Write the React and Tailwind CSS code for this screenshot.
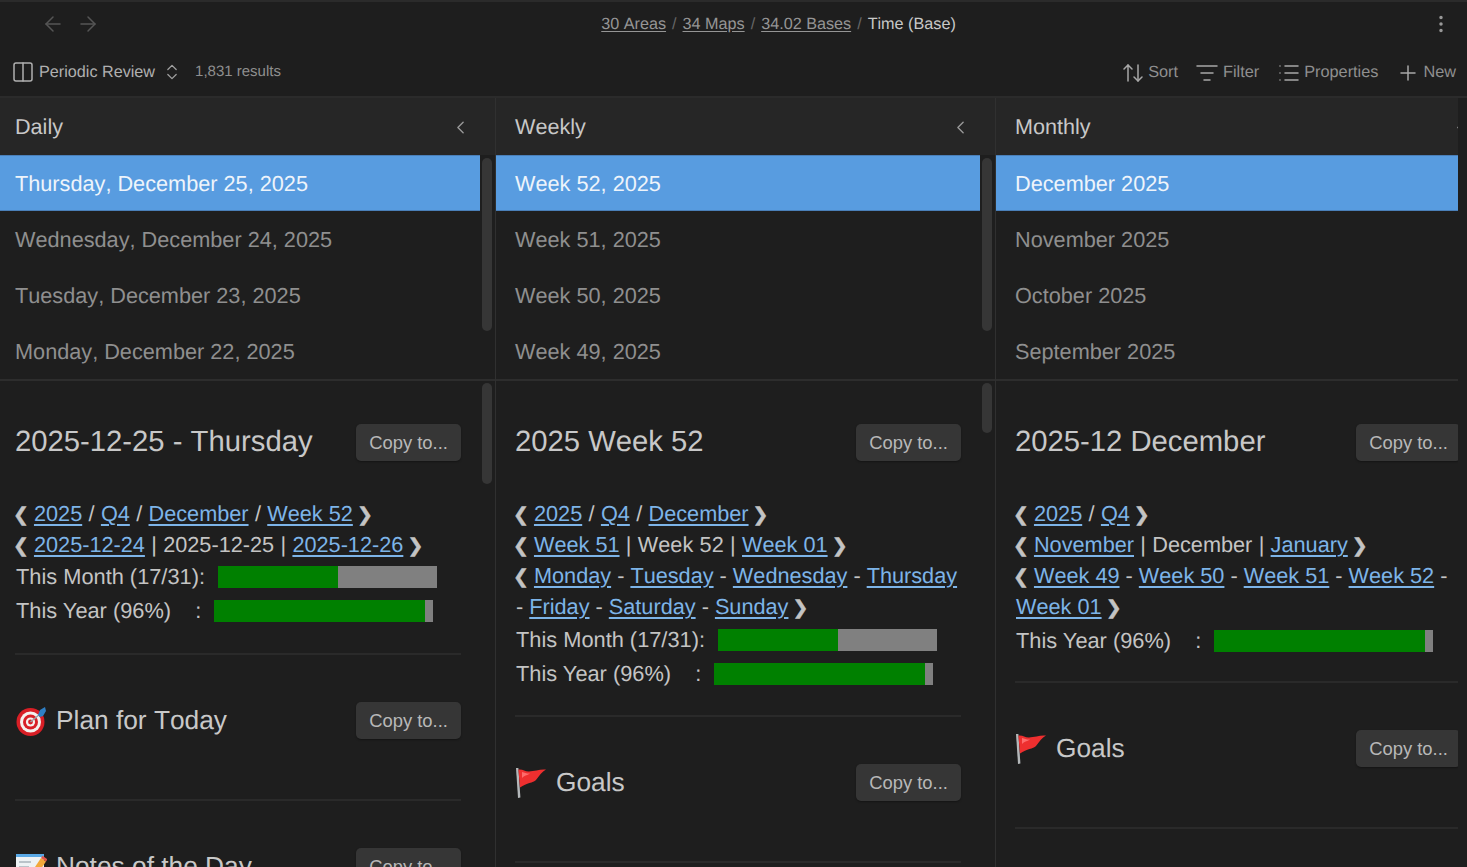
import {
  ArrowLeft,
  ArrowRight,
  ArrowUpDown,
  ChevronLeft,
  ChevronsUpDown,
  Columns2,
  EllipsisVertical,
  List,
  ListFilter,
  Plus,
} from 'lucide-react';

const columns = [
  {
    name: 'Daily',
    width: 'w-[496px]',
    listWidth: 'w-[480px]',
    inset: 'pl-[15px]',
    noteThumb: 'h-[101px]',
    barsTop: 'mt-0',
    barsBottom: 'h-[25px]',
    items: ['Thursday, December 25, 2025', 'Wednesday, December 24, 2025', 'Tuesday, December 23, 2025', 'Monday, December 22, 2025'],
    title: '2025-12-25 - Thursday',
    nav: [
      [['2025'], ' / ', ['Q4'], ' / ', ['December'], ' / ', ['Week 52']],
      [['2025-12-24'], ' | 2025-12-25 | ', ['2025-12-26']],
    ],
    month: true,
    sections: [
      { emoji: 'target', title: 'Plan for Today' },
      { emoji: 'memo', title: 'Notes of the Day' },
    ],
  },
  {
    name: 'Weekly',
    width: 'w-[500px]',
    listWidth: 'w-[484px]',
    inset: 'pl-[19px]',
    noteThumb: 'h-[50px]',
    barsTop: 'mt-px',
    barsBottom: 'h-[24px]',
    items: ['Week 52, 2025', 'Week 51, 2025', 'Week 50, 2025', 'Week 49, 2025'],
    title: '2025 Week 52',
    nav: [
      [['2025'], ' / ', ['Q4'], ' / ', ['December']],
      [['Week 51'], ' | Week 52 | ', ['Week 01']],
      [['Monday'], ' - ', ['Tuesday'], ' - ', ['Wednesday'], ' - ', ['Thursday'], ' - ', ['Friday'], ' - ', ['Saturday'], ' - ', ['Sunday']],
    ],
    month: true,
    sections: [{ emoji: 'flag', title: 'Goals' }],
  },
  {
    name: 'Monthly',
    width: 'w-[500px]',
    listWidth: 'w-[484px]',
    inset: 'pl-[19px]',
    barsTop: 'mt-[2px]',
    barsBottom: 'h-[23px]',
    items: ['December 2025', 'November 2025', 'October 2025', 'September 2025'],
    title: '2025-12 December',
    nav: [
      [['2025'], ' / ', ['Q4']],
      [['November'], ' | December | ', ['January']],
      [['Week 49'], ' - ', ['Week 50'], ' - ', ['Week 51'], ' - ', ['Week 52'], ' - ', ['Week 01']],
    ],
    month: false,
    sections: [{ emoji: 'flag', title: 'Goals' }],
  },
];

function TargetEmoji() {
  return (
    <svg viewBox="0 0 32 32" className="w-[32px] h-[32px] shrink-0">
      <circle cx="15.5" cy="17" r="14" fill="#d81f26" />
      <circle cx="15.5" cy="17" r="10.5" fill="#f4f1ee" />
      <circle cx="15.5" cy="17" r="7.5" fill="#d81f26" />
      <circle cx="15.5" cy="17" r="4.6" fill="#f4f1ee" />
      <circle cx="15.5" cy="17" r="2.4" fill="#d81f26" />
      <path d="M15.5 17 25 9" stroke="#9aa3a8" strokeWidth="1.4" />
      <path d="M23 10 25 5 30 2 31 6 28 11 25 12Z" fill="#2f7fc4" />
    </svg>
  );
}

function MemoEmoji() {
  return (
    <svg viewBox="0 0 32 32" className="w-[32px] h-[32px] shrink-0">
      <rect x="1" y="3" width="28" height="26" fill="#eef2f4" />
      <rect x="1" y="3" width="28" height="3" fill="#5aa9e6" />
      <path d="M4 11h12M4 16h10M4 21h8" stroke="#a9b4ba" strokeWidth="1.5" />
      <path d="M14 25 26 7l5 3.5L19 28l-6 2Z" fill="#f2a93b" />
      <path d="M26 7l1.5-2.2 5 3.5-1.5 2.2Z" fill="#e2574c" />
    </svg>
  );
}

function FlagEmoji() {
  return (
    <svg viewBox="0 0 32 32" className="w-[32px] h-[32px] shrink-0">
      <path d="M1 1 3 31 5.4 30.6 3.4 1Z" fill="#b4b8ba" />
      <path d="M3.4 2.5C8 2 10 4.6 14 4.4 20 4.2 25 2 31 2.6 27 5 24 9 21 13 18 16 12 15.6 5 20.6Z" fill="#ee2f2f" />
      <path d="M7 5C10 5.5 12 7 15 6.5 12 8.5 9 8.5 7 11Z" fill="#ff6b6b" />
    </svg>
  );
}

const emojis = { target: TargetEmoji, memo: MemoEmoji, flag: FlagEmoji };

function CopyButton() {
  return (
    <button className="shrink-0 w-[105px] h-[37px] rounded-[5px] bg-[#363636] text-[#b8b8b8] text-[18.4px] leading-[38px] text-center shadow-[0_1px_2px_rgba(0,0,0,0.35)]">
      Copy to...
    </button>
  );
}

function NavLine({ parts }) {
  return (
    <p className="text-[21.7px] leading-[31px] text-[#c4c4c4] ml-px">
      <span className="font-['DejaVu_Sans'] text-[19px] leading-[0] font-bold [-webkit-text-stroke:0.6px] -ml-[3px] -mr-[1px]">❮</span>{' '}
      {parts.map((part, i) =>
        Array.isArray(part) ? (
          <a key={i} className="text-[#7db4e8] underline underline-offset-[3px] decoration-[1.5px] whitespace-nowrap">
            {part[0]}
          </a>
        ) : (
          <span key={i} className={part === ' - ' ? '' : '[word-spacing:0.3px]'}>
            {part}
          </span>
        ),
      )}{' '}
      <span className="font-['DejaVu_Sans'] text-[19px] leading-[0] font-bold [-webkit-text-stroke:0.6px] -ml-[2px]">❯</span>
    </p>
  );
}

function Progress({ label, value }) {
  return (
    <div className="flex items-center h-[34px] text-[21.8px] [font-kerning:normal] text-[#c4c4c4] ml-px">
      <span className="whitespace-pre">{label}</span>
      <div className="ml-[7px] w-[219px] h-[22px] bg-[#808080]">
        <div className="h-full bg-[#008000]" style={{ width: `${value}%` }} />
      </div>
    </div>
  );
}

function Section({ emoji, title }) {
  const Emoji = emojis[emoji];
  return (
    <section className="border-t-2 border-[#2a2a2a] pt-[47px] pb-[60px] flex items-center justify-between">
      <h2 className="flex items-center gap-[9px] text-[26.3px] leading-[37px] text-[#c8c8c8] whitespace-nowrap">
        <Emoji />
        {title}
      </h2>
      <CopyButton />
    </section>
  );
}

function Column({ column, scroll }) {
  return (
    <div className={`${column.width} shrink-0 h-full flex flex-col border-r border-[#303030]`}>
      <div className={`h-[57px] shrink-0 bg-[#262626] flex items-center justify-between ${column.inset} pt-px pr-[24px] text-[21.6px] text-[#c8c8c8]`}>
        {column.name}
        <ChevronLeft size={21} strokeWidth={1.6} className="text-[#999]" />
      </div>
      <div className="h-[226px] shrink-0 flex border-b-2 border-[#2d2d2d] overflow-hidden">
        <ul className={`${column.listWidth} shrink-0`}>
          {column.items.map((item, i) => (
            <li
              key={item}
              className={
                i === 0
                  ? `h-[56px] flex items-center ${column.inset} pt-[2px] text-[21.7px] bg-[#589ce0] text-[#eef4fb] border-y border-[#4a7fb8]`
                  : `h-[56px] flex items-center ${column.inset} pt-[2px] text-[21.7px] text-[#8f8f8f]`
              }
            >
              {item}
            </li>
          ))}
        </ul>
        {scroll && (
          <div className="pt-[3px] pl-[2px]">
            <div className="w-[10px] rounded-[5px] bg-[#363636] h-[173px]" />
          </div>
        )}
      </div>
      <div className={`relative flex-1 min-h-0 overflow-hidden ${column.inset} pr-[34px]`}>
        {scroll && <div className={`absolute right-[3px] top-[2px] w-[10px] rounded-[5px] bg-[#363636] ${column.noteThumb}`} />}
        <div className="pt-[43px] pb-[37px] flex items-center justify-between">
          <h1 className="text-[29.25px] leading-[35px] pb-px text-[#c8c8c8] whitespace-nowrap">{column.title}</h1>
          <CopyButton />
        </div>
        {column.nav.map((parts, i) => (
          <NavLine key={i} parts={parts} />
        ))}
        <div className={column.barsTop}>
          {column.month && <Progress label="This Month (17/31): " value={55} />}
          <Progress label="This Year (96%)    : " value={96} />
        </div>
        <div className={column.barsBottom} />
        {column.sections.map((section) => (
          <Section key={section.title} {...section} />
        ))}
        <div className="border-t-2 border-[#2a2a2a]" />
      </div>
    </div>
  );
}

export default function App() {
  return (
    <div className="w-full h-[867px] overflow-hidden bg-[#1e1e1e] font-['Liberation_Sans',sans-serif] [text-rendering:geometricPrecision] [font-kerning:none] flex flex-col">
      {/* Title bar */}
      <header className="h-[48px] shrink-0 border-t-2 border-[#2b2b2b] pb-[2px] flex items-center justify-between pl-[41px] pr-[15px]">
        <div className="flex-1 flex items-center gap-[11px] text-[#555]">
          <ArrowLeft size={24} strokeWidth={1.5} />
          <ArrowRight size={24} strokeWidth={1.5} />
        </div>
        <nav className="flex items-center gap-[6px] text-[16.2px] text-[#959595] ml-[64px]">
          <a className="underline underline-offset-2">30 Areas</a>
          <span className="text-[#666]">/</span>
          <a className="underline underline-offset-2">34 Maps</a>
          <span className="text-[#666]">/</span>
          <a className="underline underline-offset-2">34.02 Bases</a>
          <span className="text-[#666]">/</span>
          <span className="text-[#c8c8c8]">Time (Base)</span>
        </nav>
        <div className="flex-1 flex justify-end text-[#999]">
          <EllipsisVertical size={22} strokeWidth={1.8} />
        </div>
      </header>

      {/* Base toolbar */}
      <div className="h-[50px] shrink-0 border-b-2 border-[#2b2b2b] pt-px flex items-center justify-between pl-[11px] pr-[11px] text-[#a0a0a0]">
        <div className="flex items-center">
          <Columns2 size={24} strokeWidth={1.5} className="text-[#b0b0b0]" />
          <span className="ml-[4px] text-[16.2px] text-[#b0b0b0]">Periodic Review</span>
          <ChevronsUpDown size={20} strokeWidth={1.5} className="ml-[7px]" />
          <span className="ml-[13px] text-[15px] text-[#8f8f8f]">1,831 results</span>
        </div>
        <div className="flex items-center text-[16.3px] text-[#8f8f8f]">
          <ArrowUpDown size={24} strokeWidth={1.5} className="text-[#a8a8a8]" />
          <span className="ml-[3px]">Sort</span>
          <ListFilter size={24} strokeWidth={1.5} className="ml-[17px] text-[#a8a8a8]" />
          <span className="ml-[4px]">Filter</span>
          <List size={24} strokeWidth={1.5} className="ml-[18px] text-[#a8a8a8]" />
          <span className="ml-[3px]">Properties</span>
          <Plus size={24} strokeWidth={1.5} className="ml-[18px] text-[#a8a8a8]" />
          <span className="ml-[3px]">New</span>
        </div>
      </div>

      {/* Columns, the third runs past the right edge */}
      <div className="flex-1 min-h-0 w-[1458px] flex overflow-hidden">
        {columns.map((column, i) => (
          <Column key={column.name} column={column} scroll={i < 2} />
        ))}
      </div>
    </div>
  );
}
